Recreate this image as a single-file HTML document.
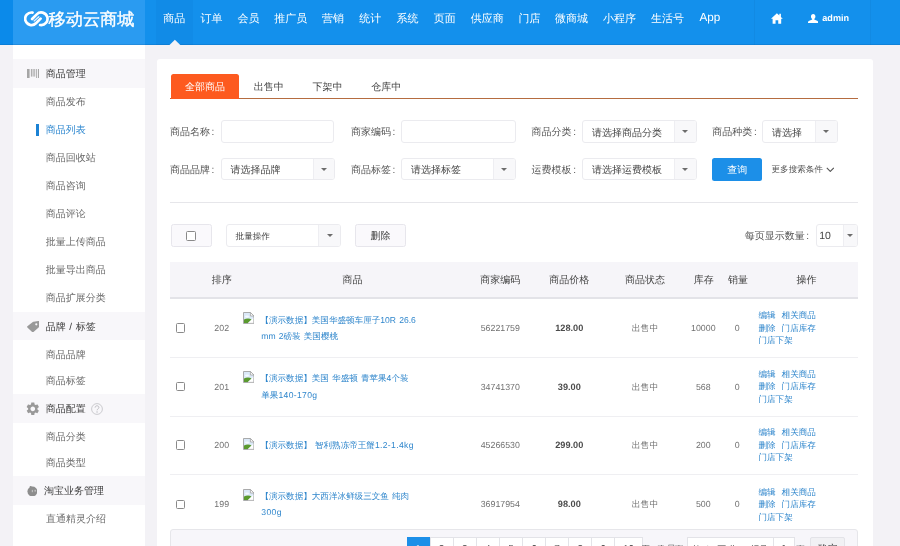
<!DOCTYPE html>
<html lang="zh"><head><meta charset="utf-8"><title>商品列表</title>
<style>
*{box-sizing:border-box;margin:0;padding:0}
html,body{width:900px;height:546px;overflow:hidden}
body{position:relative;background:#f3f2f6;font-family:"Liberation Sans",sans-serif;font-size:10px;color:#555;text-rendering:geometricPrecision}
.a{position:absolute;white-space:nowrap}
/* header */
#hdr{left:0;top:0;width:900px;height:44.5px;background:#1390ec;z-index:2}
#hdr:after{content:"";position:absolute;left:0;right:0;bottom:0;height:1px;background:rgba(0,40,90,.13)}
#hdr .strip{left:0;top:0;width:13px;height:44.5px;background:#0b8aea}
#hdr .logo{left:13px;top:0;width:132px;height:44.5px;background:#2a9bf1}
#hdr .act{left:155.6px;top:0;width:37.4px;height:44.5px;background:#118be7}
#hdr .tri{left:169.3px;top:39.6px;width:0;height:0;border-left:5.6px solid transparent;border-right:5.6px solid transparent;border-bottom:6px solid #f3f2f6;z-index:1}
.nav{top:0;height:39px;line-height:39px;text-align:center;color:#fff;font-size:11px}
.logotxt{left:48.5px;top:7px;line-height:24px;font-size:17.2px;font-weight:400;color:#fff;-webkit-text-stroke:.35px #fff}
/* sidebar */
#side{left:13px;top:44.5px;width:132px;height:502px;background:#fff}
.sh{left:13px;width:132px;background:#f8f7fa}
.st{left:45.8px;font-size:10px;color:#3a3a3a;height:20px;line-height:20px}
.si{left:45.8px;font-size:10px;color:#6a6a6a;height:20px;line-height:20px}
/* panel */
#panel{left:156.7px;top:59.4px;width:716px;height:500px;background:#fff;border-radius:3px}
.tab{top:76.4px;height:24px;line-height:24px;text-align:center;font-size:10px;color:#444}
.lbl{font-size:10px;color:#555;height:22.8px;line-height:22.8px;margin-top:2.4px}
.lbl b{font-weight:400;margin-left:1.6px}
.inp{height:22.8px;background:#fff;border:1px solid #ebebef;border-radius:3px}
.sel{height:22.8px;background:#fff;border:1px solid #ebebef;border-radius:3px;font-size:10px;color:#444;line-height:23.4px;padding-left:8.7px;overflow:hidden}
.sel i{position:absolute;right:0;top:0;bottom:0;width:21.5px;background:#f8f8fa;border-left:1px solid #eeeef2}
.sel i:after{content:"";position:absolute;left:50%;top:50%;margin:-1.2px 0 0 -3px;border-left:3px solid transparent;border-right:3px solid transparent;border-top:3px solid #6c6c6c}
.btn{height:22.8px;line-height:23.2px;text-align:center;background:#faf9fc;border:1px solid #e7e6ec;border-radius:2.5px;font-size:10px;color:#444}
.cb{width:9.6px;height:9.6px;border:1.3px solid #8a8a8a;border-radius:1.5px;background:#fff}
.th{top:262.8px;height:36px;line-height:36px;font-size:10px;color:#444;text-align:center}
.td{font-size:8.8px;color:#707070;text-align:center;height:20px;line-height:20px}
.lk{color:#2f86cc}
.ttl{word-spacing:.8px;font-size:8.57px;line-height:16.4px;color:#2f86cc;white-space:normal}
.ttl u{text-decoration:none;letter-spacing:.36px}
.ops{font-size:8.6px;line-height:12.5px;color:#2f86cc;white-space:normal}
.ops span{margin-right:6px}
.pg{top:536.8px;height:22.6px;line-height:23px;text-align:center;background:#fff;border:1px solid #e3e3e8;font-size:10px;color:#333}
.pgt{top:536.8px;height:22.6px;line-height:24px;text-align:center;font-size:8px;color:#555;overflow:hidden}
.rl{left:170px;width:688px;height:1px;background:#efeff2}
#wrap{position:absolute;left:0;top:0;width:900px;height:546px;overflow:hidden;will-change:transform}
</style></head><body><div id="wrap">

<!-- HEADER -->
<div id="hdr" class="a">
  <div class="a strip"></div>
  <div class="a logo"></div>
  <div class="a act"></div>
  <svg class="a" style="left:23.500px;top:10.5px" width="25" height="16" viewBox="0 0 25 16"><g fill="none" stroke="#fff" stroke-linecap="round" stroke-linejoin="round"><path stroke-width="2.7" d="M8.590 1.600A6.300 6.300 0 1 0 11.950 12.250L16.600 7.600"/><path stroke-width="2.7" d="M16.110 14A6.300 6.300 0 1 0 12.750 3.350L8.100 8"/><path stroke-width="1.400" stroke-opacity=".85" d="M10.100 9.900L14.800 5.700"/></g></svg>
  <div class="a logotxt">移动云商城</div>
  <div class="a nav" style="left:155.6px;width:37.4px">商品</div>
  <div class="a nav" style="left:193px;width:37px">订单</div>
  <div class="a nav" style="left:230px;width:37.2px">会员</div>
  <div class="a nav" style="left:267.2px;width:47.3px">推广员</div>
  <div class="a nav" style="left:314.5px;width:37.2px">营销</div>
  <div class="a nav" style="left:351.7px;width:37px">统计</div>
  <div class="a nav" style="left:388.7px;width:37.5px">系统</div>
  <div class="a nav" style="left:426.2px;width:37px">页面</div>
  <div class="a nav" style="left:463.2px;width:48px">供应商</div>
  <div class="a nav" style="left:511.2px;width:36.6px">门店</div>
  <div class="a nav" style="left:547.8px;width:47.4px">微商城</div>
  <div class="a nav" style="left:595.2px;width:48.5px">小程序</div>
  <div class="a nav" style="left:643.7px;width:47.6px">生活号</div>
  <div class="a nav" style="left:691.3px;width:37px;font-size:11.7px;top:-1.6px">App</div>
  <svg class="a" style="left:168px;top:38px;z-index:1" width="14" height="8" viewBox="0 0 14 8"><path d="M1.500 7L6.900 1.700L12.300 7z" fill="#f3f2f6"/></svg>
  <div class="a" style="left:754px;top:0;width:1px;height:44.5px;background:rgba(0,0,0,.035)"></div>
  <div class="a" style="left:870px;top:0;width:1px;height:44.5px;background:rgba(0,0,0,.035)"></div>
  <svg class="a" style="left:770.8px;top:13.3px" width="11.8" height="10.8" viewBox="0 0 22 20"><path fill="#fff" d="M11 0.5L0 10.5h3V20h5.5v-6.5h5V20H19v-9.5h3L18.5 7.3V1.5h-3v3z"/></svg>
  <svg class="a" style="left:808px;top:13.8px" width="10.4" height="9.6" viewBox="0 0 20 18"><path fill="#fff" d="M10 0c2.6 0 4.3 2 4.3 4.6 0 2-1 3.9-2.3 4.7v1.2l5.5 2.4c1.6.7 2.5 1.600 2.500 3.100V18H0v-2c0-1.500.9-2.400 2.500-3.100L8 10.500V9.300C6.700 8.500 5.700 6.600 5.700 4.600 5.700 2 7.400 0 10 0z"/></svg>
  <div class="a" style="left:822.3px;top:7.9px;height:20px;line-height:20px;font-size:9.1px;font-weight:700;color:#fff">admin</div>
</div>

<!-- SIDEBAR -->
<div id="side" class="a"></div>
<div id="sidebar">
  <div class="a sh" style="top:59.4px;height:28.4px"></div>
  <div class="a sh" style="top:312px;height:28.3px"></div>
  <div class="a sh" style="top:394.2px;height:28.4px"></div>
  <div class="a sh" style="top:476.3px;height:28.4px"></div>
  <!-- barcode -->
  <svg class="a" style="left:26.8px;top:69px" width="12.4" height="9" viewBox="0 0 12.4 9"><g fill="#a6a6a6"><rect x="0" y="0" width="2.6" height="9"/><rect x="3.9" y="0" width="1" height="7.6"/><rect x="5.6" y="0" width="1" height="7.6"/><rect x="7.3" y="0" width="0.9" height="7.6"/><rect x="9.2" y="0" width="0.9" height="9"/><rect x="11" y="0" width="1.1" height="9"/></g></svg>
  <div class="a st" style="top:65.1px">商品管理</div>
  <div class="a si" style="top:93.1px">商品发布</div>
  <div class="a" style="left:36.2px;top:124.2px;width:2.4px;height:11.5px;background:#1b82d4"></div>
  <div class="a si" style="top:121.0px;color:#2b86cf">商品列表</div>
  <div class="a si" style="top:149.1px">商品回收站</div>
  <div class="a si" style="top:177.1px">商品咨询</div>
  <div class="a si" style="top:204.9px">商品评论</div>
  <div class="a si" style="top:232.7px">批量上传商品</div>
  <div class="a si" style="top:260.7px">批量导出商品</div>
  <div class="a si" style="top:288.6px">商品扩展分类</div>
  <!-- tag -->
  <svg class="a" style="left:26.8px;top:320.8px" width="12.4" height="11.4" viewBox="0 0 12.4 11.4"><path fill="#999" fill-rule="evenodd" d="M6.600.7L11.300.100c.600-.1 1 .3 1 .9l-.3 4.800c0 .3-.2.600-.4.800L6.500 11c-.4.400-1 .4-1.400 0L.4 6.600c-.4-.4-.4-1 0-1.400L5.800 1c.2-.2.500-.3.800-.3zM9.300 2.200a1.100 1.100 0 1 0 0 2.200 1.100 1.100 0 0 0 0-2.200z"/></svg>
  <div class="a st" style="top:317.9px">品牌<span style="margin:0 .8px"> / </span>标签</div>
  <div class="a si" style="top:346.3px">商品品牌</div>
  <div class="a si" style="top:371.5px">商品标签</div>
  <!-- gear -->
  <svg class="a" style="left:25px;top:401.1px" width="15.6" height="15.6" viewBox="0 0 24 24"><path fill="#999" d="M19.140 12.940c.040-.3.060-.610.060-.940 0-.320-.020-.640-.070-.940l2.030-1.580c.180-.140.230-.410.120-.610l-1.920-3.320c-.120-.220-.370-.290-.590-.220l-2.390.960c-.5-.380-1.030-.7-1.620-.940l-.360-2.540c-.040-.240-.240-.410-.480-.410h-3.840c-.240 0-.430.170-.470.410l-.360 2.540c-.590.240-1.130.570-1.620.940l-2.390-.960c-.220-.080-.470 0-.590.220L2.740 8.870c-.120.210-.080.470.120.610l2.030 1.580c-.050.3-.090.630-.090.940s.020.640.070.940l-2.030 1.580c-.180.140-.230.410-.120.610l1.920 3.320c.120.220.370.290.590.220l2.390-.960c.5.380 1.030.7 1.620.940l.360 2.540c.050.240.240.410.480.410h3.840c.240 0 .440-.170.470-.410l.360-2.540c.590-.240 1.130-.560 1.620-.940l2.390.960c.220.080.470 0 .590-.220l1.920-3.320c.120-.220.070-.470-.120-.610l-2.010-1.580zM12 15.600c-1.980 0-3.600-1.620-3.600-3.600s1.620-3.600 3.600-3.600 3.600 1.620 3.600 3.600-1.620 3.600-3.600 3.600z"/></svg>
  <div class="a st" style="top:399.5px">商品配置</div>
  <svg class="a" style="left:91px;top:402.7px" width="12" height="12" viewBox="0 0 12 12"><circle cx="6" cy="6" r="5.400" fill="none" stroke="#c6c6ca" stroke-width="0.9"/><path d="M4.100 4.600c0-1.100.8-1.800 1.900-1.800s1.900.7 1.900 1.700c0 1.300-1.800 1.400-1.800 2.800" fill="none" stroke="#bdbdc2" stroke-width="1"/><circle cx="6.050" cy="9" r=".7" fill="#bdbdc2"/></svg>
  <div class="a si" style="top:428.3px">商品分类</div>
  <div class="a si" style="top:454.1px">商品类型</div>
  <!-- taobao -->
  <svg class="a" style="left:26.800px;top:485.9px" width="10.6" height="10.4" viewBox="0 0 10.6 10.4"><circle cx="5.400" cy="5.400" r="4.950" fill="#8d8d8d"/><circle cx="3.700" cy="1.100" r="1.100" fill="#8d8d8d"/><rect x="4.800" y="3.900" width="1.100" height="2.300" fill="#c4c4c4"/><rect x="7.500" y="3.800" width="1.400" height="1.800" fill="#c4c4c4"/></svg>
  <div class="a st" style="top:481.7px;left:44px">淘宝业务管理</div>
  <div class="a si" style="top:510.1px;left:46px">直通精灵介绍</div>
</div>

<!-- PANEL -->
<div id="panel" class="a"></div>
<div id="content">
  <!-- tabs -->
  <div class="a" style="left:170px;top:98px;width:688.3px;height:1px;background:#b56c40"></div>
  <div class="a" style="left:170.8px;top:74px;width:68.6px;height:24.5px;background:#fd5a1f;border-radius:2.5px 2.5px 0 0"></div>
  <div class="a tab" style="left:170.4px;width:69px;color:#fff">全部商品</div>
  <div class="a tab" style="left:239.4px;width:58.7px">出售中</div>
  <div class="a tab" style="left:298.1px;width:58.7px">下架中</div>
  <div class="a tab" style="left:356.8px;width:58.7px">仓库中</div>
  <!-- form row 1 -->
  <div class="a lbl" style="left:170px;top:120px">商品名称<b>:</b></div>
  <div class="a inp" style="left:220.8px;top:120px;width:113.7px"></div>
  <div class="a lbl" style="left:351px;top:120px">商家编码<b>:</b></div>
  <div class="a inp" style="left:401.3px;top:120px;width:114.3px"></div>
  <div class="a lbl" style="left:531.6px;top:120px">商品分类<b>:</b></div>
  <div class="a sel" style="left:582.2px;top:120px;width:114.4px;line-height:26.6px">请选择商品分类<i></i></div>
  <div class="a lbl" style="left:712.3px;top:120px">商品种类<b>:</b></div>
  <div class="a sel" style="left:762.3px;top:120px;width:75.4px;line-height:26.6px">请选择<i></i></div>
  <!-- form row 2 -->
  <div class="a lbl" style="left:170px;top:157.5px">商品品牌<b>:</b></div>
  <div class="a sel" style="left:220.8px;top:157.5px;width:114.6px">请选择品牌<i></i></div>
  <div class="a lbl" style="left:351px;top:157.5px">商品标签<b>:</b></div>
  <div class="a sel" style="left:401.3px;top:157.5px;width:114.4px">请选择标签<i></i></div>
  <div class="a lbl" style="left:531.6px;top:157.5px">运费模板<b>:</b></div>
  <div class="a sel" style="left:582.2px;top:157.5px;width:114.4px">请选择运费模板<i></i></div>
  <div class="a" style="left:712.3px;top:157.6px;width:50px;height:23px;line-height:25px;background:#1c8fe8;border-radius:2.5px;color:#fff;text-align:center;font-size:10px">查询</div>
  <div class="a" style="left:771.5px;top:159px;height:20px;line-height:20px;font-size:8.57px;color:#555">更多搜索条件</div>
  <svg class="a" style="left:825.5px;top:166.5px" width="8.6" height="5.6" viewBox="0 0 8.6 5.6"><path d="M.8.900L4.300 4.400 7.800.9" fill="none" stroke="#555" stroke-width="1.1"/></svg>
  <div class="a" style="left:170px;top:202px;width:688.3px;height:1px;background:#e6e6ea"></div>
  <!-- toolbar -->
  <div class="a btn" style="left:170.6px;top:224px;width:41.2px"></div>
  <div class="a cb" style="left:186.2px;top:231px"></div>
  <div class="a sel" style="left:226px;top:224px;width:114.8px;font-size:8.57px;padding-left:8.6px;line-height:23px">批量操作<i></i></div>
  <div class="a btn" style="left:355.2px;top:224px;width:50.5px">删除</div>
  <div class="a lbl" style="left:744.7px;top:224px">每页显示数量<b>:</b></div>
  <div class="a sel" style="left:815.7px;top:224px;width:42.6px;padding-left:2.6px;line-height:23.4px;font-size:10.5px">10<i style="width:14.6px"></i></div>
</div>

<div id="table">
<div class="a" style="left:170px;top:261.7px;width:688.3px;height:36px;background:#f6f5f9"></div>
<div class="a" style="left:170px;top:297px;width:688.3px;height:2px;background:#e3e3e8"></div>
<div class="a th" style="left:181.7px;width:80px">排序</div>
<div class="a th" style="left:312.5px;width:80px">商品</div>
<div class="a th" style="left:460.3px;width:80px">商家编码</div>
<div class="a th" style="left:529.2px;width:80px">商品价格</div>
<div class="a th" style="left:605.0px;width:80px">商品状态</div>
<div class="a th" style="left:663.7px;width:80px">库存</div>
<div class="a th" style="left:698.0px;width:80px">销量</div>
<div class="a th" style="left:766.5px;width:80px">操作</div>
<div class="a cb" style="left:175.6px;top:323.2px"></div>
<div class="a td" style="left:201.7px;width:40px;top:318.0px">202</div>
<svg class="a" style="left:243px;top:312.3px" width="11.4" height="12" viewBox="0 0 11.4 12"><path d="M.5.500H7.400L10.900 4V11.500H.5z" fill="#dbe9f8" stroke="#a2a2a2" stroke-width=".9"/><path d="M7.400.5V4H10.900z" fill="#fff" stroke="#a2a2a2" stroke-width=".8" stroke-linejoin="round"/><ellipse cx="4" cy="4.600" rx="2" ry="1.100" fill="#f4f9fe"/><path d="M1 11V7.600C3.600 6.200 6.400 6.300 8.600 7.500L5 11z" fill="#5a9a2e"/><path d="M4.800 11.200L10.500 5.700V11.200z" fill="#fff"/><path d="M5.600 11.300H10.600M10.700 11.300V6.500" stroke="#b9b9b9" stroke-width=".7" fill="none"/></svg>
<div class="a ttl" style="left:260.4px;top:311.6px;width:180px">【演示数据】美国华盛顿车厘子10R 26.6<br><span style="margin-left:.9px"></span>mm 2磅装 美国樱桃</div>
<div class="a td" style="left:460.3px;width:80px;top:318.0px">56221759</div>
<div class="a td" style="left:529.3px;width:80px;top:318.0px;font-weight:700;color:#4c4c4c;font-size:9.2px">128.00</div>
<div class="a td" style="left:605px;width:80px;top:318.0px">出售中</div>
<div class="a td" style="left:663.3px;width:80px;top:318.0px">10000</div>
<div class="a td" style="left:697.3px;width:80px;top:318.0px">0</div>
<div class="a ops" style="left:758.4px;width:80px;top:309.2px"><span>编辑</span>相关商品<br><span>删除</span>门店库存<br>门店下架</div>
<div class="a cb" style="left:175.6px;top:381.8px"></div>
<div class="a td" style="left:201.7px;width:40px;top:376.6px">201</div>
<svg class="a" style="left:243px;top:370.9px" width="11.4" height="12" viewBox="0 0 11.4 12"><path d="M.5.500H7.400L10.900 4V11.500H.5z" fill="#dbe9f8" stroke="#a2a2a2" stroke-width=".9"/><path d="M7.400.5V4H10.900z" fill="#fff" stroke="#a2a2a2" stroke-width=".8" stroke-linejoin="round"/><ellipse cx="4" cy="4.600" rx="2" ry="1.100" fill="#f4f9fe"/><path d="M1 11V7.600C3.600 6.200 6.400 6.300 8.600 7.500L5 11z" fill="#5a9a2e"/><path d="M4.800 11.200L10.500 5.700V11.200z" fill="#fff"/><path d="M5.600 11.300H10.600M10.700 11.300V6.500" stroke="#b9b9b9" stroke-width=".7" fill="none"/></svg>
<div class="a ttl" style="left:260.4px;top:370.2px;width:180px">【演示数据】美国 华盛顿 青苹果4个装<br><span style="margin-left:.9px"></span>单果<u>140-170g</u></div>
<div class="a td" style="left:460.3px;width:80px;top:376.6px">34741370</div>
<div class="a td" style="left:529.3px;width:80px;top:376.6px;font-weight:700;color:#4c4c4c;font-size:9.2px">39.00</div>
<div class="a td" style="left:605px;width:80px;top:376.6px">出售中</div>
<div class="a td" style="left:663.3px;width:80px;top:376.6px">568</div>
<div class="a td" style="left:697.3px;width:80px;top:376.6px">0</div>
<div class="a ops" style="left:758.4px;width:80px;top:367.9px"><span>编辑</span>相关商品<br><span>删除</span>门店库存<br>门店下架</div>
<div class="a cb" style="left:175.6px;top:440.4px"></div>
<div class="a td" style="left:201.7px;width:40px;top:435.2px">200</div>
<svg class="a" style="left:243px;top:438.1px" width="11.4" height="12" viewBox="0 0 11.4 12"><path d="M.5.500H7.400L10.900 4V11.500H.5z" fill="#dbe9f8" stroke="#a2a2a2" stroke-width=".9"/><path d="M7.400.5V4H10.900z" fill="#fff" stroke="#a2a2a2" stroke-width=".8" stroke-linejoin="round"/><ellipse cx="4" cy="4.600" rx="2" ry="1.100" fill="#f4f9fe"/><path d="M1 11V7.600C3.600 6.200 6.400 6.300 8.600 7.500L5 11z" fill="#5a9a2e"/><path d="M4.800 11.200L10.500 5.700V11.200z" fill="#fff"/><path d="M5.600 11.300H10.600M10.700 11.300V6.500" stroke="#b9b9b9" stroke-width=".7" fill="none"/></svg>
<div class="a ttl" style="left:260.4px;top:437.0px;width:180px">【演示数据】 智利熟冻帝王蟹<u>1.2-1.4kg</u></div>
<div class="a td" style="left:460.3px;width:80px;top:435.2px">45266530</div>
<div class="a td" style="left:529.3px;width:80px;top:435.2px;font-weight:700;color:#4c4c4c;font-size:9.2px">299.00</div>
<div class="a td" style="left:605px;width:80px;top:435.2px">出售中</div>
<div class="a td" style="left:663.3px;width:80px;top:435.2px">200</div>
<div class="a td" style="left:697.3px;width:80px;top:435.2px">0</div>
<div class="a ops" style="left:758.4px;width:80px;top:426.4px"><span>编辑</span>相关商品<br><span>删除</span>门店库存<br>门店下架</div>
<div class="a cb" style="left:175.6px;top:499.5px"></div>
<div class="a td" style="left:201.7px;width:40px;top:494.3px">199</div>
<svg class="a" style="left:243px;top:488.6px" width="11.4" height="12" viewBox="0 0 11.4 12"><path d="M.5.500H7.400L10.900 4V11.500H.5z" fill="#dbe9f8" stroke="#a2a2a2" stroke-width=".9"/><path d="M7.400.5V4H10.900z" fill="#fff" stroke="#a2a2a2" stroke-width=".8" stroke-linejoin="round"/><ellipse cx="4" cy="4.600" rx="2" ry="1.100" fill="#f4f9fe"/><path d="M1 11V7.600C3.600 6.200 6.400 6.300 8.600 7.500L5 11z" fill="#5a9a2e"/><path d="M4.800 11.200L10.500 5.700V11.200z" fill="#fff"/><path d="M5.600 11.300H10.600M10.700 11.300V6.500" stroke="#b9b9b9" stroke-width=".7" fill="none"/></svg>
<div class="a ttl" style="left:260.4px;top:487.9px;width:180px">【演示数据】大西洋冰鲜级三文鱼 纯肉<br><span style="margin-left:.9px"></span><u>300g</u></div>
<div class="a td" style="left:460.3px;width:80px;top:494.3px">36917954</div>
<div class="a td" style="left:529.3px;width:80px;top:494.3px;font-weight:700;color:#4c4c4c;font-size:9.2px">98.00</div>
<div class="a td" style="left:605px;width:80px;top:494.3px">出售中</div>
<div class="a td" style="left:663.3px;width:80px;top:494.3px">500</div>
<div class="a td" style="left:697.3px;width:80px;top:494.3px">0</div>
<div class="a ops" style="left:758.4px;width:80px;top:485.6px"><span>编辑</span>相关商品<br><span>删除</span>门店库存<br>门店下架</div>
<div class="a rl" style="top:357.2px"></div>
<div class="a rl" style="top:415.8px"></div>
<div class="a rl" style="top:474.4px"></div>
<div class="a" style="left:170.2px;top:529.2px;width:688.2px;height:40px;background:#f7f6fa;border:1px solid #e6e6ea;border-radius:3px"></div>
<div class="a pg" style="left:406.5px;width:23.1px;background:#1c8fe8;border-color:#1c8fe8;color:#fff">1</div>
<div class="a pg" style="left:429.6px;width:24.1px">2</div>
<div class="a pg" style="left:452.7px;width:24.1px">3</div>
<div class="a pg" style="left:475.8px;width:24.1px">4</div>
<div class="a pg" style="left:498.9px;width:24.1px">5</div>
<div class="a pg" style="left:522.0px;width:24.1px">6</div>
<div class="a pg" style="left:545.1px;width:24.1px">7</div>
<div class="a pg" style="left:568.2px;width:24.1px">8</div>
<div class="a pg" style="left:591.3px;width:24.1px">9</div>
<div class="a pg" style="left:614.4px;width:28.3px">10</div>
<div class="a pgt" style="left:641.7px;width:22.5px">下一页</div>
<div class="a pgt" style="left:664.2px;width:22.3px">尾页</div>
<div class="a pg" style="left:686.5px;width:87.5px;font-size:8.5px">第1/19页 共186记录</div>
<div class="a pg" style="left:773px;width:21.5px;font-weight:700">1</div>
<div class="a pgt" style="left:794.5px;width:12px">页</div>
<div class="a pg" style="left:810px;width:35.4px;background:#f1f1f4;border-radius:2px">确定</div>
</div>
</div></body></html>
